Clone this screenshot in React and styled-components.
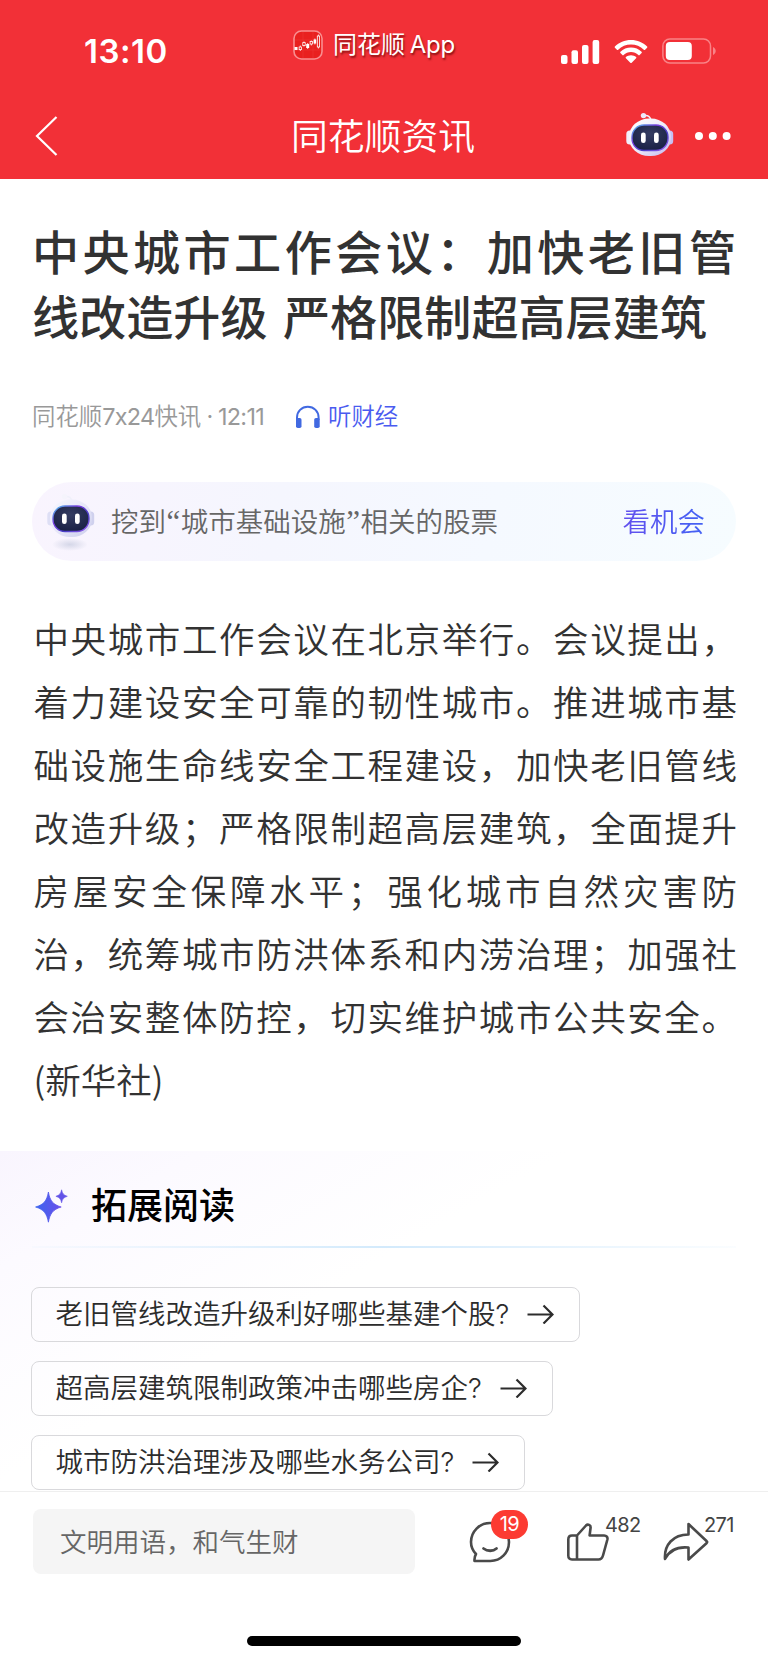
import styled, { createGlobalStyle } from 'styled-components';

const GlobalStyle = createGlobalStyle`
  * {
    box-sizing: border-box;
  }

  body {
    margin: 0;
    background: #fff;
    font-family: Inter, "Noto Sans CJK SC", sans-serif;
    font-weight: 350;
    text-spacing-trim: space-all;
    overflow: hidden;
  }

  svg {
    display: block;
    flex: none;
  }
`;

const Page = styled.div`
  width: 768px;
  height: 1663px;
  display: flex;
  flex-direction: column;
  background: #fff;
`;

const Header = styled.header`
  height: 179px;
  flex: none;
  background: #f23037;
  color: #fff;
`;

const StatusBar = styled.div`
  height: 92px;
  display: grid;
  grid-template-columns: 293px 1fr auto;
  align-items: start;
  padding-right: 51px;
`;

const Clock = styled.div`
  padding: 31px 0 0 84px;
  font-size: 33px;
  line-height: 40px;
  font-weight: 600;
  letter-spacing: 0.5px;
`;

const AppTag = styled.div`
  display: flex;
  align-items: center;
  gap: 10px;
  padding-top: 28px;
  font-size: 24px;
  line-height: 34px;
  font-weight: 400;
  text-shadow: 1px 2px 2px rgba(90, 0, 0, 0.7);
  word-spacing: -2px;
  white-space: nowrap;
`;

const AppName = styled.span`
  letter-spacing: ${(props) => props.$spacing || 0}px;
`;

const Indicators = styled.div`
  display: flex;
  align-items: center;
  gap: 14px;
  padding-top: 38px;
`;

const NavBar = styled.nav`
  height: 87px;
  display: grid;
  grid-template-columns: 1fr auto 1fr;
  align-items: center;
  padding: 0 37px 0 35px;
`;

const NavTitle = styled.h1`
  margin: 0;
  padding-top: 2px;
  font-size: 36.8px;
  line-height: 50px;
  font-weight: 350;
`;

const NavActions = styled.div`
  display: flex;
  align-items: center;
  justify-content: flex-end;
  gap: 21px;

  svg:first-child {
    margin-top: -3px;
  }
`;

const Article = styled.article`
  height: 972px;
  flex: none;
  padding: 41px 32px 0;
`;

const Headline = styled.h2`
  margin: 0;
  font-size: 47.1px;
  line-height: 65px;
  font-weight: 500;
  word-spacing: 3px;
  color: #323232;
`;

const Line = styled.span`
  display: block;
  white-space: nowrap;
  text-align: justify;
  text-align-last: ${(props) => (props.$last ? 'left' : 'justify')};
`;

const Meta = styled.div`
  height: 34px;
  margin-top: 50px;
  display: flex;
  align-items: center;
  font-size: 23.4px;
  line-height: 34px;
  color: #999;
`;

const Numeric = styled.span`
  font-weight: 400;
  letter-spacing: -0.7px;
  word-spacing: -0.5px;
`;

const Listen = styled.a`
  display: flex;
  align-items: center;
  gap: 7px;
  margin-left: 31px;
  color: #4a5bf0;
`;

const Tip = styled.div`
  height: 79px;
  margin-top: 48px;
  padding: 0 31px 0 15px;
  display: flex;
  align-items: center;
  border-radius: 40px;
  background: linear-gradient(100deg, #f9f4fe 0%, #f5f6fe 35%, #f5f9ff 65%, #f6fcff 100%);
  font-size: 27.5px;
  line-height: 40px;
  color: #666;
`;

const TipText = styled.span`
  flex: 1;
  margin-left: 16px;
  white-space: nowrap;
`;

const Quote = styled.span`
  display: inline-block;
  width: 14.8px;
  text-align: center;
  font-family: "Liberation Serif", serif;
  font-size: 31px;
`;

const TipAction = styled.a`
  color: transparent;
  background: linear-gradient(90deg, #6250ee, #4262f4);
  background-clip: text;
`;

const Body = styled.p`
  margin: 45px -1px 0 0;
  padding-left: 1.5px;
  font-size: 35.5px;
  line-height: 63px;
  color: #323232;
  font-family: "Noto Sans CJK SC", sans-serif;
`;

const Related = styled.section`
  height: 340px;
  flex: none;
  padding: 0 32px;
  background: linear-gradient(150deg, #f9f5fe 0%, #fcfaff 15%, #fff 42%);
`;

const RelatedHead = styled.div`
  height: 95px;
  padding: 14px 0 0 3px;
  display: flex;
  align-items: center;
  gap: 23px;
  font-size: 36px;
  line-height: 50px;
  font-weight: 500;
  color: #000;
`;

const Divider = styled.div`
  height: 2px;
  background: linear-gradient(90deg, rgba(210, 234, 252, 0.1), #d3eafc 50%, rgba(210, 234, 252, 0.1));
`;

const Questions = styled.div`
  display: flex;
  flex-direction: column;
  align-items: flex-start;
  gap: 19px;
  margin: 39px 0 0 -1px;
`;

const Question = styled.a`
  height: 55px;
  display: flex;
  align-items: center;
  gap: 18px;
  padding: 0 25px 1px 23.5px;
  border: 1px solid #d9d9dc;
  border-radius: 8px;
  font-size: 27.5px;
  line-height: 40px;
  color: #2c2c2c;
  white-space: nowrap;
`;

const Footer = styled.footer`
  height: 172px;
  flex: none;
  display: flex;
  flex-direction: column;
  align-items: center;
  border-top: 1px solid #efefef;
  background: #fff;
`;

const Toolbar = styled.div`
  width: 100%;
  height: 65px;
  margin-top: 17px;
  padding-left: 33px;
  display: flex;
  align-items: flex-start;
`;

const CommentBox = styled.div`
  width: 382px;
  height: 65px;
  padding: 0 27px 0 27px;
  border-radius: 8px;
  background: #f5f5f5;
  font-size: 26.5px;
  line-height: 66px;
  color: #666;
`;

const Action = styled.button`
  position: relative;
  margin: 12px 0 0 ${(props) => props.$gap}px;
  padding: 0;
  border: 0;
  background: none;
  font-family: inherit;
`;

const Count = styled.span`
  position: absolute;
  left: ${(props) => props.$left}px;
  top: -8px;
  font-size: 20px;
  line-height: 24px;
  letter-spacing: -0.6px;
  color: #444;
`;

const Badge = styled.span`
  position: absolute;
  left: 22px;
  top: -11px;
  width: 37px;
  height: 29px;
  border-radius: 15px;
  background: #fc3b32;
  color: #fff;
  font-size: 20px;
  line-height: 28px;
  letter-spacing: -0.5px;
  text-align: center;
`;

const HomeIndicator = styled.div`
  width: 274px;
  height: 10px;
  margin-top: 62px;
  border-radius: 5px;
  background: #000;
`;

const paragraph = [
  '中央城市工作会议在北京举行。会议提出，',
  '着力建设安全可靠的韧性城市。推进城市基',
  '础设施生命线安全工程建设，加快老旧管线',
  '改造升级；严格限制超高层建筑，全面提升',
  '房屋安全保障水平；强化城市自然灾害防',
  '治，统筹城市防洪体系和内涝治理；加强社',
  '会治安整体防控，切实维护城市公共安全。',
  '(新华社)',
];

const questions = [
  '老旧管线改造升级利好哪些基建个股?',
  '超高层建筑限制政策冲击哪些房企?',
  '城市防洪治理涉及哪些水务公司?',
];

const AppIcon = () => (
  <svg width="30" height="30" viewBox="0 0 30 30">
    <rect x="1" y="1" width="28" height="28" rx="7.5" fill="#e9201f" stroke="#f98e90" strokeWidth="1.6" />
    <path d="M2 10h26M2 20h26M10 2v26M20 2v26" stroke="#ee3a38" strokeWidth="0.5" />
    <g fill="#fff">
      <rect x="1.5" y="17" width="3" height="3" />
      <rect x="13.2" y="14" width="3" height="4" />
      <rect x="20.6" y="9.5" width="2.6" height="4" />
    </g>
    <g fill="none" stroke="#fff" strokeWidth="0.8">
      <path d="M7.3 15.5v5.5M11 11.500v5M18.3 10.500v5M21.9 8.5v6M14.7 13v6M25.4 4.500v14" />
      <g fill="#e9201f">
        <rect x="6.1" y="17" width="2.4" height="2.6" />
        <rect x="9.8" y="12.6" width="2.4" height="3" />
        <rect x="17.1" y="11.4" width="2.4" height="2.6" />
        <rect x="24.3" y="6" width="2.3" height="11" />
      </g>
    </g>
  </svg>
);

const Signal = () => (
  <svg width="39" height="25" viewBox="0 0 39 25" fill="#fff">
    <rect x="0" y="16" width="6.5" height="9" rx="2" />
    <rect x="10.5" y="11.3" width="6.5" height="13.7" rx="2" />
    <rect x="21" y="6" width="6.5" height="19" rx="2" />
    <rect x="31.6" y="1" width="6.6" height="24" rx="2" />
  </svg>
);

const Wifi = () => (
  <svg width="34" height="25" viewBox="0 0 34 25" fill="#fff">
    <path d="M17 1C10.600 1 5 3.500 0.900 7.500c-.4.4-.4.800 0 1.200l2 2c.4.4.9.4 1.300 0C7.600 7.400 12 5.500 17 5.500s9.400 1.900 12.800 5.200c.4.4.9.4 1.300 0l2-2c.4-.4.4-.8 0-1.200C29 3.500 23.400 1 17 1z" />
    <path d="M17 8.600c-4.100 0-7.800 1.500-10.600 4.200-.4.4-.4.900 0 1.300l2 2c.4.4.8.4 1.200 0 2-1.900 4.600-3 7.400-3s5.400 1.100 7.400 3c.4.4.8.4 1.200 0l2-2c.4-.4.4-.9 0-1.300C24.800 10.100 21.100 8.600 17 8.600z" />
    <path d="M17 16.200c-2 0-3.700.7-5.100 1.900-.4.4-.4.800 0 1.200l4.400 4.500c.4.4 1 .4 1.400 0l4.400-4.500c.4-.4.4-.8 0-1.200-1.400-1.200-3.100-1.900-5.100-1.900z" />
  </svg>
);

const Battery = () => (
  <svg width="55" height="26" viewBox="0 0 55 26">
    <rect x="0.900" y="0.900" width="47.600" height="24.200" rx="7" fill="none" stroke="#f98387" strokeWidth="1.500" />
    <rect x="3.800" y="4" width="26" height="18" rx="4" fill="#fff" />
    <path d="M51 9v8c1.700-.8 2.700-2.300 2.700-4S52.700 9.800 51 9z" fill="#f98387" />
  </svg>
);

const Robot = ({ id, pale }) => (
  <svg width="48" height={pale ? 60 : 45} viewBox={pale ? '0 -1 48 60' : '0 0 48 45'}>
    <defs>
      <linearGradient id={`${id}-head`} x1="0" y1="0" x2="1" y2="1">
        <stop offset="0" stopColor={pale ? '#f8f8ff' : '#fff'} />
        <stop offset="0.5" stopColor={pale ? '#e7e7f8' : '#eeecfa'} />
        <stop offset="1" stopColor={pale ? '#cbcdec' : '#c3b7ee'} />
      </linearGradient>
      <linearGradient id={`${id}-rim`} x1="0" y1="0" x2="1" y2="1">
        <stop offset="0" stopColor="#4cc6ea" />
        <stop offset="0.35" stopColor="#7a3ee0" />
        <stop offset="0.65" stopColor="#4a3fc8" />
        <stop offset="1" stopColor="#9a5cf0" />
      </linearGradient>
      <radialGradient id={`${id}-face`} cx="0.5" cy="0.35" r="0.65">
        <stop offset="0" stopColor="#343c62" />
        <stop offset="1" stopColor="#1a2145" />
      </radialGradient>
      <radialGradient id={`${id}-shadow`}>
        <stop offset="0" stopColor="#d5d7e8" />
        <stop offset="1" stopColor="#d5d7e8" stopOpacity="0" />
      </radialGradient>
    </defs>
    {pale && <ellipse cx="23" cy="51.500" rx="18" ry="6.500" fill={`url(#${id}-shadow)`} />}
    <path d="M18 3.600c4-.6 6 .6 6.800 4" fill="none" stroke={pale ? '#f0f0fa' : '#f4eefa'} strokeWidth="1.500" />
    <circle cx="17.500" cy="3.600" r="2.700" fill={pale ? '#f5f4fc' : '#eee9fb'} />
    <rect x="0.300" y="18.500" width="7" height="14" rx="3.500" fill={pale ? '#dedff5' : '#f1effc'} />
    <rect x="40.200" y="18.500" width="7" height="14" rx="3.500" fill={pale ? '#d0d1ee' : '#c7bff2'} />
    <rect x="3" y="6.600" width="42" height="37.400" rx="20" ry="18" fill={`url(#${id}-head)`} />
    <rect x="6" y="13" width="36" height="25.500" rx="12" fill={`url(#${id}-face)`} stroke={`url(#${id}-rim)`} strokeWidth="1.400" />
    <rect x="15" y="20.500" width="4.700" height="10.500" rx="2.350" fill="#fff" />
    <rect x="28" y="20.500" width="4.700" height="10.500" rx="2.350" fill="#fff" />
  </svg>
);

const Headphones = () => (
  <svg width="26" height="24" viewBox="0 0 26 24">
    <path d="M2 15v-2.500C2 6.500 6.600 1.700 12.800 1.700S23.600 6.500 23.600 12.500V15" fill="none" stroke="#4169e1" strokeWidth="2" />
    <rect x="1" y="13" width="5.500" height="10" rx="1.800" fill="#4169e1" />
    <rect x="19.200" y="13" width="5.500" height="10" rx="1.800" fill="#4169e1" />
  </svg>
);

const Sparkle = () => (
  <svg width="33" height="34" viewBox="0 0 33 34">
    <defs>
      <linearGradient id="spark">
        <stop offset="0" stopColor="#3d66ef" />
        <stop offset="1" stopColor="#6a4fea" />
      </linearGradient>
    </defs>
    <path d="M13.400 3C15 12 18 15.500 26.200 18 18 20.500 15 24.500 13.400 33.200 11.800 24.500 8.800 20.500.6 18 8.800 15.500 11.800 12 13.400 3z" fill="url(#spark)" stroke="url(#spark)" strokeWidth="0.800" />
    <path d="M26.600.8c.8 3.800 1.900 5.200 5.700 6.500-3.800 1.300-4.900 2.700-5.700 6.500-.8-3.800-1.900-5.200-5.700-6.500 3.800-1.300 4.900-2.700 5.700-6.500z" fill="#6253e8" stroke="#6253e8" strokeWidth="0.600" />
  </svg>
);

const Arrow = () => (
  <svg width="27" height="20" viewBox="0 0 27 20" fill="none" stroke="#2c2c2c" strokeWidth="2.200">
    <path d="M.5 10.500h25M16.500 1.500l9 9-9 9" />
  </svg>
);

const iconProps = {
  fill: 'none',
  stroke: '#4a4a4a',
  strokeWidth: 2.6,
  strokeLinejoin: 'round',
  strokeLinecap: 'round',
};

const App = () => {
  return (
    <Page>
      <GlobalStyle />
      <Header>
        <StatusBar>
          <Clock>13:10</Clock>
          <AppTag>
            <AppIcon />
            <span>
              <AppName>同花顺</AppName> <AppName $spacing={-0.3}>App</AppName>
            </span>
          </AppTag>
          <Indicators>
            <Signal />
            <Wifi />
            <Battery />
          </Indicators>
        </StatusBar>
        <NavBar>
          <svg width="24" height="40" viewBox="0 0 24 40" fill="none" stroke="#fff" strokeWidth="2.200">
            <path d="M21.500 1L2 20l19.500 19" />
          </svg>
          <NavTitle>同花顺资讯</NavTitle>
          <NavActions>
            <Robot id="nav" />
            <svg width="36" height="8" viewBox="0 0 36 8" fill="#fff">
              <circle cx="4" cy="4" r="4" />
              <circle cx="17.800" cy="4" r="4" />
              <circle cx="31.600" cy="4" r="4" />
            </svg>
          </NavActions>
        </NavBar>
      </Header>

      <Article>
        <Headline>
          <Line>中央城市工作会议：加快老旧管</Line>
          <Line $last>线改造升级 严格限制超高层建筑</Line>
        </Headline>
        <Meta>
          <span>
            同花顺<Numeric>7x24</Numeric>快讯<Numeric> · 12:11</Numeric>
          </span>
          <Listen>
            <Headphones />
            听财经
          </Listen>
        </Meta>
        <Tip>
          <Robot id="tip" pale />
          <TipText>
            挖到<Quote>“</Quote>城市基础设施<Quote>”</Quote>相关的股票
          </TipText>
          <TipAction>看机会</TipAction>
        </Tip>
        <Body>
          {paragraph.map((line, i) => (
            <Line key={line} $last={i === paragraph.length - 1}>
              {line}
            </Line>
          ))}
        </Body>
      </Article>

      <Related>
        <RelatedHead>
          <Sparkle />
          拓展阅读
        </RelatedHead>
        <Divider />
        <Questions>
          {questions.map((question) => (
            <Question key={question}>
              {question}
              <Arrow />
            </Question>
          ))}
        </Questions>
      </Related>

      <Footer>
        <Toolbar>
          <CommentBox>文明用语，和气生财</CommentBox>
          <Action $gap={54}>
            <svg width="42" height="42" viewBox="0 0 42 42" {...iconProps}>
              <path d="M5.500 40h15.800C32 40 40 31.500 40 21S31.500 2 21 2 2 10.500 2 21c0 4.500 1.600 8.500 5 12-1.200 2-1.700 4.500-1.500 7z" />
              <path d="M14.500 27.500c4 3 9.500 3 13 0" strokeWidth="2.800" />
            </svg>
            <Badge>19</Badge>
          </Action>
          <Action $gap={55}>
            <svg width="43" height="42" viewBox="0 0 43 42" {...iconProps}>
              <path d="M11 14.500L20 4.500c1.800-1.800 4.800-.5 4.600 2l-1 8h14.500c2.400 0 3.800 1.800 3.300 4L37 34.500c-.7 2.500-2 4-4.500 4H6c-2.500 0-3.700-1.500-3.700-4v-16c0-2.500 1.200-4 3.700-4zM11 14.500v24" />
            </svg>
            <Count $left={39}>482</Count>
          </Action>
          <Action $gap={54}>
            <svg width="46" height="42" viewBox="0 0 46 42" {...iconProps}>
              <path d="M25.500 3l18 17c.9.800.9 1.400 0 2.200l-18 16.300V26.500C15 25.500 6.500 29 2 38 1 24 10 13.500 25.500 13.500z" />
            </svg>
            <Count $left={41}>271</Count>
          </Action>
        </Toolbar>
        <HomeIndicator />
      </Footer>
    </Page>
  );
};

export default App;
